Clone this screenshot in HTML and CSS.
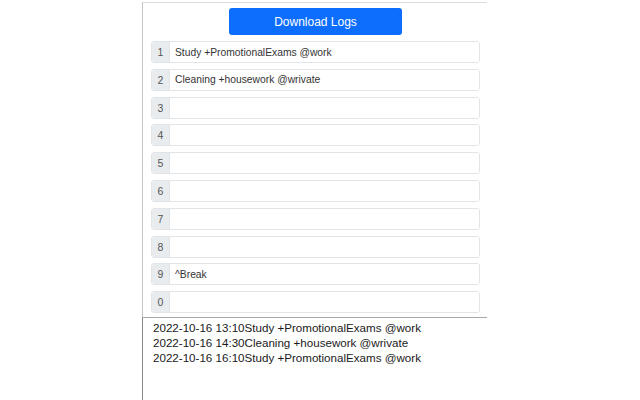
FILE: index.html
```html
<!DOCTYPE html>
<html>
<head>
<meta charset="utf-8">
<link rel="stylesheet" href="styles.css">
</head>
<body>
<div class="panel">
  <div class="top">
    <div class="actions"><button class="btn">Download Logs</button></div>
    <div class="rows">
      <div class="row"><span class="num">1</span><span class="field">Study +PromotionalExams @work</span></div>
      <div class="row"><span class="num">2</span><span class="field">Cleaning +housework @wrivate</span></div>
      <div class="row"><span class="num">3</span><span class="field"></span></div>
      <div class="row"><span class="num">4</span><span class="field"></span></div>
      <div class="row"><span class="num">5</span><span class="field"></span></div>
      <div class="row"><span class="num">6</span><span class="field"></span></div>
      <div class="row"><span class="num">7</span><span class="field"></span></div>
      <div class="row"><span class="num">8</span><span class="field"></span></div>
      <div class="row"><span class="num">9</span><span class="field">^Break</span></div>
      <div class="row"><span class="num">0</span><span class="field"></span></div>
    </div>
  </div>
  <div class="log">
    <div>2022-10-16 13:10Study +PromotionalExams @work</div>
    <div>2022-10-16 14:30Cleaning +housework @wrivate</div>
    <div>2022-10-16 16:10Study +PromotionalExams @work</div>
  </div>
</div>
</body>
</html>
```
FILE: styles.css
```css
html, body {
  margin: 0;
  padding: 0;
  background: #fff;
  font-family: "Liberation Sans", Arial, sans-serif;
}
.panel {
  margin: 2px 0 0 142px;
  width: 345px;
  height: 398px;
  box-sizing: border-box;
  border-top: 1px solid #dcdcdc;
  border-left: 1px solid #c4c4c4;
  display: flex;
  flex-direction: column;
}
.top {
  padding: 5px 7px 0 8px;
}
.actions {
  display: flex;
  justify-content: center;
}
.btn {
  width: 173px;
  height: 27px;
  background: #0d6efd;
  color: #fff;
  border: none;
  border-radius: 3px;
  font-family: "Liberation Sans", Arial, sans-serif;
  font-size: 12px;
  padding: 0;
}
.rows {
  margin-top: 6px;
  display: flex;
  flex-direction: column;
  gap: 5.8px;
}
.row {
  display: flex;
  height: 22px;
  box-sizing: border-box;
  border: 1px solid #e2e5e8;
  border-radius: 3px;
  overflow: hidden;
}
.num {
  width: 17px;
  flex: none;
  background: #e9ecef;
  border-right: 1px solid #e2e5e8;
  color: #555;
  font-size: 10.5px;
  display: flex;
  align-items: center;
  justify-content: center;
}
.field {
  flex: 1;
  background: #fff;
  color: #333;
  font-size: 10.3px;
  display: flex;
  align-items: center;
  padding-left: 5px;
}
.log {
  flex: 1;
  margin-top: 4px;
  border-top: 1px solid #a8a8a8;
  border-left: 1px solid #8a8a8a;
  margin-left: -1px;
  padding: 2px 0 0 10px;
  font-size: 11.6px;
  line-height: 15px;
  color: #1a1a1a;
}
```
